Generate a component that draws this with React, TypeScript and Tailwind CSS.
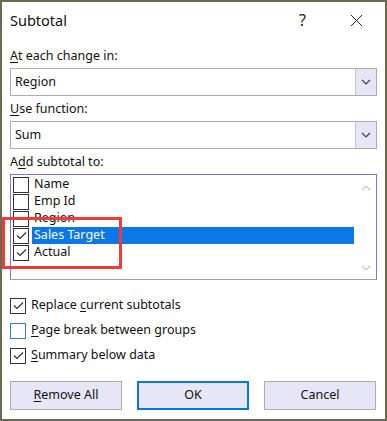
import { FC, ReactNode } from "react";

// Small check glyph used inside the Windows-style checkboxes
const Tick: FC = () => (
  <svg width="13" height="13" viewBox="0 0 13 13" className="block">
    <path d="M2 6.5 L5 9.5 L11 3.5" fill="none" stroke="#2b2b2b" strokeWidth="1.1" />
  </svg>
);

const Chevron: FC<{ up?: boolean; color?: string }> = ({ up, color = "#404040" }) => (
  <svg width="10" height="6" viewBox="0 0 10 6" className="block">
    <path
      d={up ? "M1 5 L5 1 L9 5" : "M1 1 L5 5 L9 1"}
      fill="none"
      stroke={color}
      strokeWidth="1.2"
    />
  </svg>
);

interface ComboProps {
  value: string;
}

const Combo: FC<ComboProps> = ({ value }) => (
  <div className="flex h-[28px] w-full border border-[#adadad] bg-white">
    <div className="flex flex-1 items-center pl-[4px] text-[12.5px] text-[#111]">{value}</div>
    <div className="flex w-[21px] items-center justify-center border-l border-[#c4c4d8] bg-[#e6e6f7]">
      <Chevron />
    </div>
  </div>
);

interface ListRow {
  label: string;
  checked: boolean;
  selected?: boolean;
}

const rows: ListRow[] = [
  { label: "Name", checked: false },
  { label: "Emp Id", checked: false },
  { label: "Region", checked: false },
  { label: "Sales Target", checked: true, selected: true },
  { label: "Actual", checked: true },
];

interface OptionProps {
  checked: boolean;
  focus?: boolean;
  children: ReactNode;
}

const Option: FC<OptionProps> = ({ checked, focus, children }) => (
  <div className="flex h-[25px] items-center gap-[5px]">
    <div
      className={`flex h-[16px] w-[16px] items-center justify-center border bg-white ${
        focus ? "border-[#2b7de0]" : "border-[#333]"
      }`}
    >
      {checked && <Tick />}
    </div>
    <span className="text-[12.5px] text-[#111]">{children}</span>
  </div>
);

const Button: FC<{ primary?: boolean; children: ReactNode }> = ({ primary, children }) => (
  <div
    className={`flex h-[29px] w-[112px] items-center justify-center bg-[#e6e6f7] text-[12.5px] text-[#111] ${
      primary ? "border-2 border-[#0a74e0]" : "border border-[#adadad]"
    }`}
  >
    {children}
  </div>
);

export default function App() {
  return (
    <div
      className="h-[421px] w-[387px] border-2 border-[#6b6b55] bg-white"
      style={{ fontFamily: '"Segoe UI", "Noto Sans", sans-serif' }}
    >
      {/* Title bar */}
      <div className="flex h-[36px] items-center pl-[8px] pr-[22px]">
        <span className="flex-1 pt-[2px] text-[14.5px] text-[#111]">Subtotal</span>
        <span className="mr-[44px] text-[16px] text-[#222]">?</span>
        <svg width="13" height="13" viewBox="0 0 13 13">
          <path d="M1 1 L12 12 M12 1 L1 12" stroke="#222" strokeWidth="1" />
        </svg>
      </div>

      <div className="px-[8px]">
        <div className="mt-[10px] h-[16px] text-[12.5px] leading-[16px] text-[#111]">
          <u className="underline-offset-2">A</u>t each change in:
        </div>
        <div className="mt-[4px]">
          <Combo value="Region" />
        </div>

        <div className="mt-[5px] h-[16px] text-[12.5px] leading-[16px] text-[#111]">
          <u className="underline-offset-2">U</u>se function:
        </div>
        <div className="mt-[4px]">
          <Combo value="Sum" />
        </div>

        <div className="mt-[5px] h-[16px] text-[12.5px] leading-[16px] text-[#111]">
          A<u className="underline-offset-2">d</u>d subtotal to:
        </div>

        {/* Field list */}
        <div className="relative mt-[4px] flex h-[106px] border border-[#8c6fd4] border-b-[#a0a0a0] bg-white">
          <div className="flex-1 pl-[2px] pt-[1px]">
            {rows.map((row) => (
              <div key={row.label} className="flex h-[17px] items-center">
                <div className="flex h-[16px] w-[16px] items-center justify-center border border-[#333] bg-white">
                  {row.checked && <Tick />}
                </div>
                <span
                  className={`ml-[3px] flex h-[17px] items-center pl-[2px] text-[12.5px] ${
                    row.selected ? "w-[322px] bg-[#0a78e6] text-white" : "text-[#111]"
                  }`}
                >
                  {row.label}
                </span>
              </div>
            ))}
          </div>
          <div className="flex w-[20px] flex-col items-center justify-between pb-[8px] pt-[10px]">
            <Chevron up color="#c4c4c4" />
            <Chevron color="#c4c4c4" />
          </div>
          {/* red annotation box */}
          <div className="absolute left-[-9px] top-[42px] h-[52px] w-[120px] border-[3px] border-[#f23a3a]" />
        </div>

        {/* Options */}
        <div className="mt-[13px] flex flex-col">
          <Option checked>
            Replace <u className="underline-offset-2">c</u>urrent subtotals
          </Option>
          <Option checked={false} focus>
            <u className="underline-offset-2">P</u>age break between groups
          </Option>
          <Option checked>
            <u className="underline-offset-2">S</u>ummary below data
          </Option>
        </div>

        <div className="mt-[13px] flex gap-[15px]">
          <Button>
            <span>
              <u className="underline-offset-2">R</u>emove All
            </span>
          </Button>
          <Button primary>OK</Button>
          <Button>Cancel</Button>
        </div>
      </div>
    </div>
  );
}
